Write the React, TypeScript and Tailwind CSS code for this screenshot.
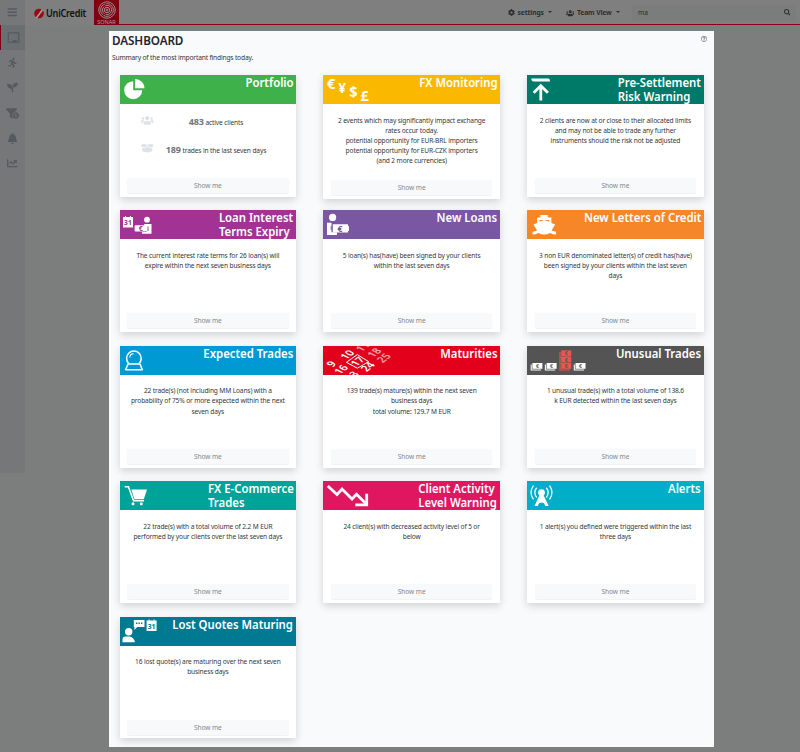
import type { ReactNode } from "react";
import {
  FaBars,
  FaBell,
  FaBoxOpen,
  FaChalkboard,
  FaChartLine,
  FaCog,
  FaFunnelDollar,
  FaRegQuestionCircle,
  FaRunning,
  FaSearch,
  FaSeedling,
  FaUsers,
} from "react-icons/fa";

const art = "block h-[29px] w-[72px] shrink-0";

function Note({ x, y, fill = "#fff", ink = "#555" }: { x: number; y: number; fill?: string; ink?: string }) {
  return (
    <g transform={`translate(${x} ${y})`}>
      <path d="M0 1.5V7h9.8" fill="none" stroke={fill} strokeWidth="1.1" />
      <rect x="1.2" y="0" width="10" height="5.8" fill={fill} />
      <text x="6.2" y="4.8" fontSize="5.2" fontWeight="bold" textAnchor="middle" fill={ink}>€</text>
    </g>
  );
}

function CalendarIcon({ x, y, ink }: { x: number; y: number; ink: string }) {
  return (
    <g transform={`translate(${x} ${y})`}>
      <path d="M0 1h2V0h1v1h4V0h1v1h2v10.5H0z" fill="#fff" />
      <text x="5" y="9.2" fontSize="6.8" fontWeight="bold" textAnchor="middle" fill={ink}>31</text>
    </g>
  );
}

const Pie = (
  <svg className={art} viewBox="0 0 72 29" fill="#fff">
    <path d="M13.2 6.2v9h9a9 9 0 1 1-9-9z" />
    <path d="M15.2 4a9.2 9.2 0 0 1 9.3 9.3h-9.3z" />
  </svg>
);

const Currencies = (
  <svg className={art} viewBox="0 0 72 29" fill="#fff" fontWeight="bold" fontSize="14.5" fontFamily="Noto Sans">
    <text x="4" y="14.3">€</text>
    <text x="15.2" y="17.8" fontSize="13.5">¥</text>
    <text x="26.3" y="21.8">$</text>
    <text x="37.5" y="25.6">£</text>
  </svg>
);

const ArrowTop = (
  <svg className={art} viewBox="0 0 72 29">
    <path d="M4.3 3.5H21.5q1.6.6 1.6 3H6q-1.7-.6-1.7-3z" fill="#fff" />
    <path d="M13.8 25.5V11.5M6.7 17.8l7.1-7 7.1 7" fill="none" stroke="#fff" strokeWidth="2.8" />
  </svg>
);

const LoanExpiry = (
  <svg className={art} viewBox="0 0 72 29" fontFamily="Noto Sans">
    <CalendarIcon x={3} y={6} ink="#a23394" />
    <circle cx="27" cy="9.7" r="2.9" fill="#fff" />
    <path d="M24 14h7.5v9.7H22v-1.6h5z" fill="#fff" />
    <rect x="14.6" y="15.2" width="13" height="6.2" rx=".8" fill="#fff" />
    <text x="20.8" y="20.8" fontSize="6.8" fontWeight="bold" textAnchor="middle" fill="#a23394">€</text>
    <path d="M28 16.5v4.5" stroke="#a23394" strokeWidth=".9" />
  </svg>
);

const NewLoan = (
  <svg className={art} viewBox="0 0 72 29" fontFamily="Noto Sans">
    <circle cx="9.6" cy="7.4" r="3.6" fill="#fff" />
    <path d="M4 12.7h4.5v9.5H14V25H4z" fill="#fff" />
    <path d="M9.8 14.2H25v1.4l1 .8v4l-1 .8v1.4H9.8z" fill="#fff" />
    <path d="M8.2 16v4" stroke="#7957a3" strokeWidth=".9" />
    <text x="17" y="21.6" fontSize="8.6" fontWeight="bold" textAnchor="middle" fill="#7957a3">€</text>
  </svg>
);

const Boat = (
  <svg className={art} viewBox="0 0 72 29" fill="#fff">
    <path d="M13.3 5h7.5v2.6h3.6v5.5l3.8 1.3-3.7 6.2q2 1 4.6 1.2v2.7q-3.4 0-6-1.6-5.8 3-11.5 0-2.6 1.6-6 1.6v-2.7q2.6-.2 4.5-1.2L6.5 14.4l3.5-1.3V7.6h3.3z" />
    <path d="M12.5 10H22v1.4l-4.8-1.3-4.7 1.3z" fill="#f68626" />
  </svg>
);

const CrystalBall = (
  <svg className={art} viewBox="0 0 72 29" fill="none" stroke="#fff" strokeWidth="1.5" strokeLinejoin="round">
    <path d="M9 17.8A7.3 7.3 0 1 1 18.8 17.8" />
    <path d="M8 18h12l2.3 5.7H5.6z" />
    <path d="M9.7 11.5a4.3 4.3 0 0 1 3.8-3.9" strokeWidth="1.1" />
  </svg>
);

const MaturityCalendar = (
  <svg className={art} viewBox="0 0 72 29" fill="#fff" fontFamily="Noto Sans" fontSize="10" fontWeight="600">
    <g textAnchor="middle">
      <text transform="translate(8.5 18) rotate(-38) skewX(25)" y="3.4">9</text>
      <text transform="translate(18.2 23.5) rotate(-38) skewX(25)" y="3.4">16</text>
      <text transform="translate(29 30) rotate(-38) skewX(25)" y="3.4">23</text>
      <text transform="translate(24.5 8.8) rotate(-38) skewX(25)" y="3.4">10</text>
      <text transform="translate(34.6 15.5) rotate(-38) skewX(25)" y="3.4">17</text>
      <text transform="translate(45 20.8) rotate(-38) skewX(25)" y="3.4">24</text>
      <g opacity=".62">
        <text transform="translate(40 1) rotate(-38) skewX(25)" y="3.4">11</text>
        <text transform="translate(51.3 6.8) rotate(-38) skewX(25)" y="3.4">18</text>
        <text transform="translate(61 12) rotate(-38) skewX(25)" y="3.4">25</text>
      </g>
    </g>
    <path d="M23.4 16.3 34.3 8.6 45.7 15.7 34.3 22.2z" fill="none" stroke="#fff" strokeWidth="1" />
  </svg>
);

const MoneyStacks = (
  <svg className={art} viewBox="0 0 72 29" fontFamily="Noto Sans">
    <Note x={4.2} y={17} />
    <Note x={18.4} y={17} />
    <Note x={33} y={4.4} fill="#e8574b" />
    <Note x={33} y={10.7} fill="#e8574b" />
    <Note x={33} y={17} fill="#e8574b" />
    <Note x={47.3} y={17} />
  </svg>
);

const Cart = (
  <svg className={art} viewBox="0 0 72 29" fill="#fff">
    <path d="M4.7 5.7h3.7l5.2 14H24" fill="none" stroke="#fff" strokeWidth="1.6" />
    <path d="M11.3 8.5H27l-3.2 9.8H14.4z" />
    <circle cx="13" cy="22.8" r="1.5" />
    <circle cx="21.3" cy="22.8" r="1.5" />
  </svg>
);

const DownTrend = (
  <svg className={art} viewBox="0 0 72 29" fill="none" stroke="#fff" strokeWidth="2.8">
    <path d="m4.8 5 9.2 8.6 5-5.6 10 10 4.5-4.8 9.5 9.5" />
    <path d="M32.3 23.9h11.4V12.7" />
  </svg>
);

const Antenna = (
  <svg className={art} viewBox="0 0 72 29" fill="none" stroke="#fff" strokeWidth="1.3">
    <circle cx="14.5" cy="11.6" r="3.4" fill="#fff" stroke="none" />
    <path d="M13 13h3l5.7 12h-3.4l-1.3-2.7q-2.500-1.4-5 0L10.700 25H7.5z" fill="#fff" stroke="none" />
    <path d="M9.7 6.7a7.3 7.3 0 0 0 0 9.8M19.3 6.7a7.3 7.3 0 0 1 0 9.8M6.5 4.6a11 11 0 0 0 0 13.8M22.5 4.6a11 11 0 0 1 0 13.8" />
  </svg>
);

const LostQuote = (
  <svg className={art} viewBox="0 0 72 29" fill="#fff" fontFamily="Noto Sans">
    <circle cx="8.7" cy="14.7" r="3.7" />
    <path d="M2.5 25.3v-2.8a3 3 0 0 1 3-3h4.3q4.3 1.3 5.2 5.8z" />
    <path d="M13.8 3h10.7v7h-7.3l-2.8 3v-3h-.6z" />
    <path d="M16 6.3h6.6" stroke="#007a91" strokeWidth="1.5" strokeDasharray="1.4 1.1" />
    <CalendarIcon x={26.6} y={2.6} ink="#007a91" />
  </svg>
);

interface Topic {
  title: string[];
  color: string;
  icon: ReactNode;
  lines: string[];
  tall?: boolean;
}

const topics: Topic[] = [
  {
    title: ["Portfolio"],
    color: "bg-[#3fb14a]",
    icon: Pie,
    lines: [],
  },
  {
    title: ["FX Monitoring"],
    color: "bg-[#fab900]",
    icon: Currencies,
    lines: [
      "2 events which may significantly impact exchange",
      "rates occur today.",
      "potential opportunity for EUR-BRL importers",
      "potential opportunity for EUR-CZK importers",
      "(and 2 more currencies)",
    ],
    tall: true,
  },
  {
    title: ["Pre-Settlement", "Risk Warning"],
    color: "bg-[#007a68]",
    icon: ArrowTop,
    lines: [
      "2 clients are now at or close to their allocated limits",
      "and may not be able to trade any further",
      "instruments should the risk not be adjusted",
    ],
  },
  {
    title: ["Loan Interest", "Terms Expiry"],
    color: "bg-[#a23394]",
    icon: LoanExpiry,
    lines: ["The current interest rate terms for 26 loan(s) will", "expire within the next seven business days"],
  },
  {
    title: ["New Loans"],
    color: "bg-[#7957a3]",
    icon: NewLoan,
    lines: ["5 loan(s) has(have) been signed by your clients", "within the last seven days"],
  },
  {
    title: ["New Letters of Credit"],
    color: "bg-[#f68626]",
    icon: Boat,
    lines: [
      "3 non EUR denominated letter(s) of credit has(have)",
      "been signed by your clients within the last seven",
      "days",
    ],
  },
  {
    title: ["Expected Trades"],
    color: "bg-[#0099d3]",
    icon: CrystalBall,
    lines: ["22 trade(s) (not including MM Loans) with a", "probability of 75% or more expected within the next", "seven days"],
  },
  {
    title: ["Maturities"],
    color: "bg-[#e3001b]",
    icon: MaturityCalendar,
    lines: ["139 trade(s) mature(s) within the next seven", "business days", "total volume: 129.7 M EUR"],
  },
  {
    title: ["Unusual Trades"],
    color: "bg-[#545454]",
    icon: MoneyStacks,
    lines: ["1 unusual trade(s) with a total volume of 138.6", "k EUR detected within the last seven days"],
  },
  {
    title: ["FX E-Commerce", "Trades"],
    color: "bg-[#00a398]",
    icon: Cart,
    lines: ["22 trade(s) with a total volume of 2.2 M EUR", "performed by your clients over the last seven days"],
  },
  {
    title: ["Client Activity", "Level Warning"],
    color: "bg-[#e01760]",
    icon: DownTrend,
    lines: ["24 client(s) with decreased activity level of 5 or", "below"],
  },
  {
    title: ["Alerts"],
    color: "bg-[#00aec7]",
    icon: Antenna,
    lines: ["1 alert(s) you defined were triggered within the last", "three days"],
  },
  {
    title: ["Lost Quotes Maturing"],
    color: "bg-[#007a91]",
    icon: LostQuote,
    lines: ["16 lost quote(s) are maturing over the next seven", "business days"],
  },
];

function Stat({ icon, value, label }: { icon: ReactNode; value: string; label: string }) {
  return (
    <div className="flex h-[27.3px] items-center">
      <span className="flex w-[56px] shrink-0 justify-center text-[#dee2e6]">{icon}</span>
      <p className="-ml-[16px] w-[113px] text-center whitespace-nowrap">
        <b className="text-[9px] text-[#6c757d]">{value}</b> {label}
      </p>
    </div>
  );
}

function Card({ topic }: { topic: Topic }) {
  return (
    <article
      className={`flex w-[176.7px] flex-col bg-white shadow-[0_3px_8px_rgba(0,0,0,0.16)] ${topic.tall ? "h-[124.2px]" : "h-[121.7px]"}`}
    >
      <header className={`flex h-[29px] shrink-0 justify-between overflow-hidden text-white ${topic.color}`}>
        <div className="w-0 shrink-0">{topic.icon}</div>
        <h2 className="mr-[2.8px] origin-right scale-x-[0.915] pt-[1px] font-['Noto_Sans',sans-serif] text-[12.4px] leading-[13.7px] font-semibold whitespace-nowrap">
          {topic.title.map((line) => (
            <span key={line} className="block">{line}</span>
          ))}
        </h2>
      </header>
      {topic.lines.length > 0 ? (
        <div className="flex-1 pt-[11.5px] text-center text-[6.6px] leading-[10.1px] tracking-[-0.13px] whitespace-nowrap text-[#33383d]">
          {topic.lines.map((line) => (
            <p key={line}>{line}</p>
          ))}
        </div>
      ) : (
        <div className="flex-1 pt-[4.5px] text-[6.6px] tracking-[-0.12px] text-[#33383d]">
          <Stat icon={<FaUsers className="mt-[-3px] size-[12.5px]" />} value="483" label="active clients" />
          <Stat icon={<FaBoxOpen className="mt-[-3px] size-[12.5px]" />} value="189" label="trades in the last seven days" />
        </div>
      )}
      <button className="mx-auto mb-[3.8px] h-[15px] w-[161.5px] shrink-0 rounded-[2px] bg-[#f8f9fa] text-[6.6px] leading-[15.5px] tracking-[-0.07px] text-[#81888e] shadow-[0_0.5px_1px_rgba(0,0,0,0.06)]">
        Show me
      </button>
    </article>
  );
}

function Caret() {
  return <span className="-mt-px border-x-2 border-t-2 border-x-transparent border-t-[#2a2f33]" />;
}

function SonarMark() {
  return (
    <svg className="size-[18px] shrink-0" viewBox="0 0 19 19" fill="none" stroke="#a6a6a6" strokeWidth=".9">
      <circle cx="9.5" cy="9.5" r="8.7" />
      <circle cx="9.5" cy="9.5" r="6.7" strokeDasharray="14 1" />
      <circle cx="9.5" cy="9.5" r="4.8" strokeDasharray="9 1" />
      <circle cx="9.5" cy="9.5" r="2.9" />
      <circle cx="9.5" cy="9.5" r="1" />
    </svg>
  );
}

const navItems = [
  { Icon: FaChalkboard, size: "h-[11px] w-[13px]" },
  { Icon: FaRunning, size: "size-[10.5px]" },
  { Icon: FaSeedling, size: "size-[11px]" },
  { Icon: FaFunnelDollar, size: "size-[13px]" },
  { Icon: FaBell, size: "size-[11px]" },
  { Icon: FaChartLine, size: "size-[10.5px]" },
];

export default function App() {
  return (
    <div className="flex h-[752px] w-[800px] flex-col overflow-hidden bg-[#7c7d7d] font-['Noto_Sans','Open_Sans',sans-serif]">
      <div className="flex h-[25px] shrink-0 bg-[#7f7f7f] text-[#2a2f33]">
        <div className="flex w-[25px] items-center justify-center bg-[#757778] text-[#55595d]">
          <FaBars className="size-[10.5px]" />
        </div>
        <div className="flex w-[69px] items-center pt-[1px] pl-[9px]">
          <svg className="h-[11px] w-[10px] shrink-0" viewBox="0 0 10 11">
            <circle cx="5" cy="5.5" r="4.8" fill="#980a12" />
            <path d="M1.2 10.2 7.8 1.2 9.2 2.2 3.4 10z" fill="#a0a0a0" />
          </svg>
          <span className="ml-[1.5px] origin-left scale-x-[0.83] text-[11px] leading-[14px] font-semibold tracking-[-0.3px] text-[#111]">UniCredit</span>
        </div>
        <div className="flex w-[25px] flex-col items-center bg-[#80000f] pt-[1px] text-[#a6a6a6]">
          <SonarMark />
          <span className="text-[5.5px] leading-[6px]">SONAR</span>
        </div>
        <div className="flex flex-1 items-center border-b-[1.5px] border-[#90000f] pt-[2px] text-[6.7px] font-bold tracking-[-0.1px]">
          <div className="ml-[388.5px] flex w-[58px] items-center">
            <FaCog className="size-[7px]" />
            <span className="mr-[4px] ml-[3px]">settings</span>
            <Caret />
          </div>
          <div className="flex w-[66.5px] items-center">
            <FaUsers className="size-[8.5px]" />
            <span className="mr-[4px] ml-[3px]">Team View</span>
            <Caret />
          </div>
          <div className="-mt-[1px] flex h-[16px] w-[164px] items-center justify-between rounded-[2px] bg-[#7b7c7c] pr-[6px] pl-[6px] font-normal">
            <span className="pt-[1px]">ma</span>
            <FaSearch className="size-[6.5px]" />
          </div>
        </div>
      </div>
      <div className="flex flex-1">
        <nav className="h-[448px] w-[25px] bg-[#757778] text-[#555a5e]">
          {navItems.map(({ Icon, size }, i) => (
            <div
              key={i}
              className={`flex h-[25.2px] items-center justify-center ${i === 0 ? "border-l border-[#80000f] bg-[#6b6f71]" : ""}`}
            >
              <Icon className={size} />
            </div>
          ))}
        </nav>
        <main className="mt-[6px] ml-[83.5px] h-[716px] w-[605.5px] bg-[#f8fafc] pl-[3.5px]">
          <div className="flex justify-between pr-[7px]">
            <h1 className="h-[20px] origin-left scale-x-[0.93] font-['Noto_Sans',sans-serif] text-[12.6px] leading-[19px] font-semibold tracking-[-0.1px] text-[#212529]">DASHBOARD</h1>
            <FaRegQuestionCircle className="mt-[5px] size-[6px] text-[#6c757d]" />
          </div>
          <p className="h-[24px] text-[6.7px] leading-[13px] tracking-[-0.19px] text-[#33383d]">Summary of the most important findings today.</p>
          <div className="ml-[7.5px] grid auto-rows-[135.45px] grid-cols-[repeat(3,203.8px)] items-start">
            {topics.map((topic) => (
              <Card key={topic.title[0]} topic={topic} />
            ))}
          </div>
        </main>
      </div>
    </div>
  );
}
